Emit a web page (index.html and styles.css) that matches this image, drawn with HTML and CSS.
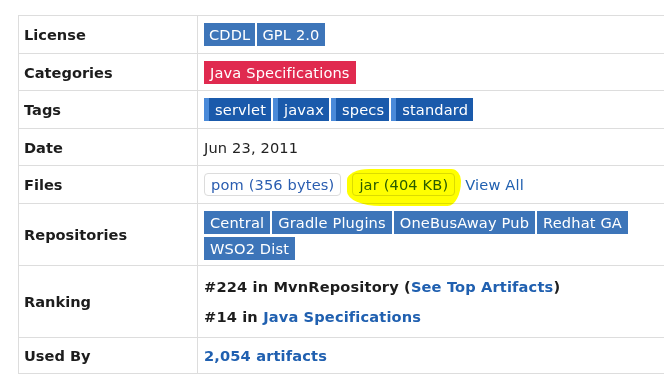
FILE: index.html
```html
<!DOCTYPE html>
<html lang="en">
<head>
<meta charset="utf-8">
<title>Artifact details</title>
<link rel="stylesheet" href="styles.css">
</head>
<body>
<table class="grid">
  <tr class="r38">
    <th>License</th>
    <td><span class="b lic">CDDL</span><span class="b lic">GPL 2.0</span></td>
  </tr>
  <tr class="r37">
    <th>Categories</th>
    <td><a class="b cat">Java Specifications</a></td>
  </tr>
  <tr class="r38">
    <th>Tags</th>
    <td><a class="b tag">servlet</a><a class="b tag">javax</a><a class="b tag">specs</a><a class="b tag">standard</a></td>
  </tr>
  <tr class="r37">
    <th>Date</th>
    <td>Jun 23, 2011</td>
  </tr>
  <tr class="r38">
    <th>Files</th>
    <td class="files"><a class="pill">pom (356 bytes)</a><span class="mark"><a class="pill">jar (404 KB)</a></span><a class="link">View All</a></td>
  </tr>
  <tr class="r62">
    <th>Repositories</th>
    <td class="wrapcell"><div class="badges"><a class="b lic">Central</a><a class="b lic">Gradle Plugins</a><a class="b lic">OneBusAway Pub</a><a class="b lic">Redhat GA</a><a class="b lic">WSO2 Dist</a></div></td>
  </tr>
  <tr class="r72">
    <th>Ranking</th>
    <td class="rank">
      <div>#224 in MvnRepository (<a class="link">See Top Artifacts</a>)</div>
      <div>#14 in <a class="link">Java Specifications</a></div>
    </td>
  </tr>
  <tr class="r36">
    <th>Used By</th>
    <td class="rank"><a class="link">2,054 artifacts</a></td>
  </tr>
</table>
</body>
</html>
```

FILE: styles.css
```css
html, body {
  margin: 0;
  background: #fff;
}
body {
  font-family: "DejaVu Sans", Verdana, sans-serif;
  font-size: 14.6px;
  color: #222;
  overflow: hidden;
}
.grid {
  border-collapse: collapse;
  margin: 15px 0 0 18px;
  width: 720px;
}
.grid th, .grid td {
  border: 1px solid #dddddd;
  padding: 0 6px;
  vertical-align: middle;
  text-align: left;
}
.grid td { letter-spacing: 0.15px; }
.grid th {
  width: 167px;
  font-weight: bold;
  color: #1d1d1d;
  padding-left: 5px;
}
.r38 { height: 38px; }
.r37 { height: 37px; }
.r62 { height: 62px; }
.r72 { height: 72px; }
.r36 { height: 36px; }

.b {
  display: inline-block;
  height: 23px;
  line-height: 23px;
  padding: 0 5px;
  margin-right: 2px;
  color: #fff;
  vertical-align: middle;
}
.lic { background: #3d75b9; }
.cat { background: #e02a4f; padding: 0 6px; }
.tag {
  background: #1a5aab;
  border-left: 5px solid #4a8ad9;
  padding: 0 5px 0 6px;
}
.badges {
  display: flex;
  flex-wrap: wrap;
  gap: 3px 2px;
  width: 430px;
  padding: 1px 0 0;
}
.badges .b { margin: 0; padding: 0 6px; }

.files { position: relative; }
.pill {
  display: inline-block;
  height: 23px;
  line-height: 21px;
  padding: 0 6px;
  border: 1px solid #dcdcdc;
  border-radius: 4px;
  color: #2a5db0;
  vertical-align: middle;
  box-sizing: border-box;
}
.mark {
  position: relative;
  display: inline-block;
  margin: 0 10px 0 11px;
  vertical-align: middle;
}
/* highlighter stroke laid over the jar link */
.mark::after {
  content: "";
  position: absolute;
  left: -5px;
  right: -6px;
  top: -4px;
  bottom: -10px;
  background: #ffff00;
  border-radius: 20% 10px 12% 30% / 30% 12px 70% 40%;
  mix-blend-mode: multiply;
  pointer-events: none;
}
.link { color: #2060b0; text-decoration: none; }
.files .link { vertical-align: middle; }

.rank { font-weight: bold; color: #1d1d1d; letter-spacing: 0.3px; }
.rank div { line-height: 30px; }
```
